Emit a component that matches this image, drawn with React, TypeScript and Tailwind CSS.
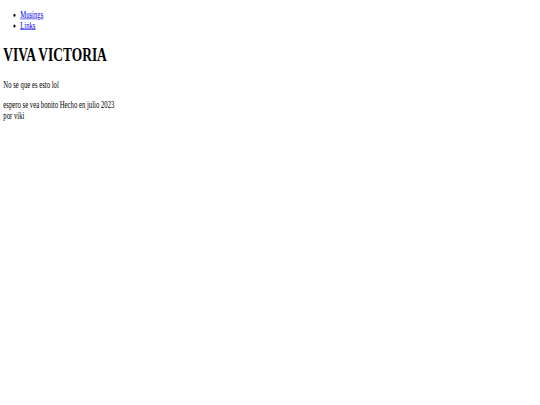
export default function App() {
  return (
    <div className="min-h-[405px] bg-white overflow-hidden">
      {/* page drawn at 16px defaults, squashed like the screenshot */}
      <div className="flow-root w-[1300px] px-2 origin-top-left scale-x-[0.42] scale-y-[0.6] font-['Liberation_Serif',serif] text-[16px] leading-[normal] text-black">
        <ul className="list-disc pl-10 my-4">
          <li>
            <a href="#" className="text-[#0000ee] underline">
              Musings
            </a>
          </li>
          <li>
            <a href="#" className="text-[#0000ee] underline">
              Links
            </a>
          </li>
        </ul>
        <h1 className="text-[32px] font-bold my-[21.44px]">VIVA VICTORIA</h1>
        <p className="my-4">No se que es esto lol</p>
        <p className="my-4">
          espero se vea bonito Hecho en julio 2023
          <br />
          por viki
        </p>
      </div>
    </div>
  );
}
